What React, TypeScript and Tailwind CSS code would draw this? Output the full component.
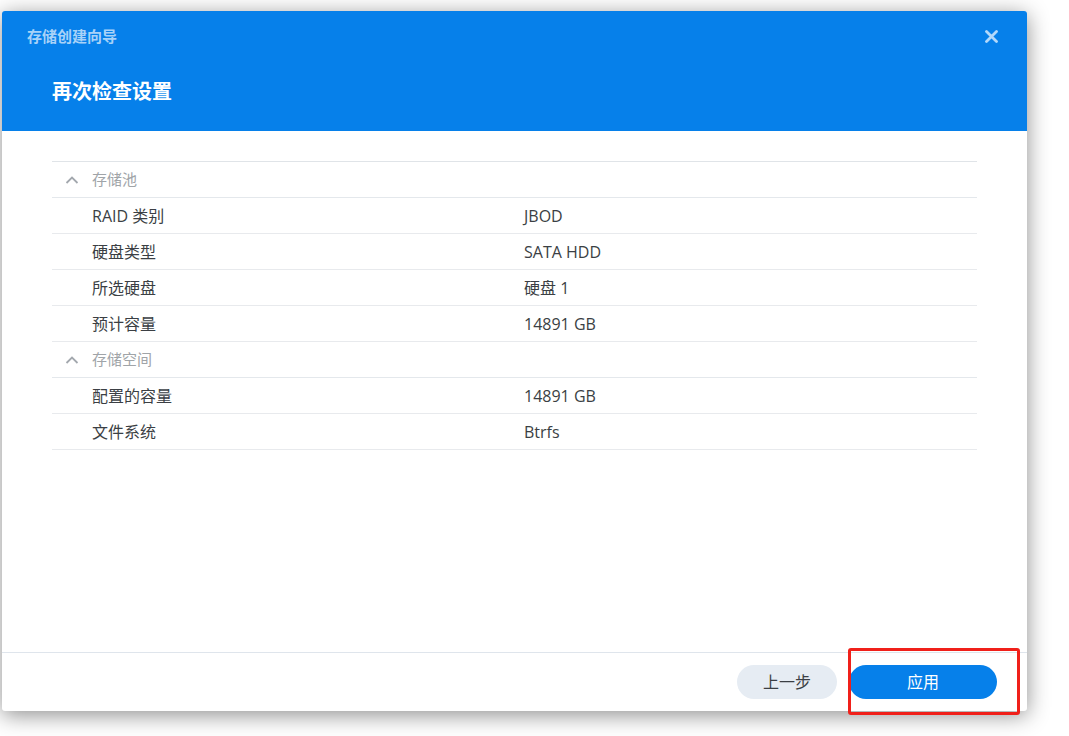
import React from "react";

const font = { fontFamily: '"Open Sans", "Noto Sans CJK SC", "Noto Sans", sans-serif' };

function Chevron() {
  return (
    <svg width="14" height="10" viewBox="0 0 14 10" className="shrink-0">
      <polyline points="1.5,8 7,2.5 12.5,8" fill="none" stroke="#a3a8ae" strokeWidth="1.8" />
    </svg>
  );
}

function Section({ title }: { title: string }) {
  return (
    <div className="flex h-[36px] items-center border-b border-[#e4e8ec] pl-[13px]">
      <Chevron />
      <span className="ml-[13px] text-[15px] text-[#a0a4a8]">{title}</span>
    </div>
  );
}

function Row({ label, value }: { label: string; value: string }) {
  return (
    <div className="flex h-[36px] items-center border-b border-[#e8eaed] text-[16px] text-[#3b3f44]">
      <div className="w-[472px] pl-[40px]">{label}</div>
      <div>{value}</div>
    </div>
  );
}

export default function App() {
  return (
    <div className="relative h-[736px] w-[1069px] overflow-hidden bg-white" style={font}>
      <div className="ml-[2px] mt-[11px] flex h-[700px] w-[1025px] flex-col overflow-hidden rounded-[3px] bg-white shadow-[0_4px_22px_rgba(0,0,0,0.45)]">
        <div className="relative h-[120px] shrink-0 bg-[#0680ea]">
          <div className="pl-[25px] pt-[15px] text-[15px] font-bold leading-[20px] text-[#a8d2f8]">存储创建向导</div>
          <div className="pl-[50px] pt-[32px] text-[20px] font-bold leading-[28px] text-white">再次检查设置</div>
          <svg className="absolute right-[29px] top-[19px]" width="13" height="13" viewBox="0 0 13 13">
            <path d="M1.5 1.5 L11.5 11.5 M11.5 1.5 L1.5 11.5" stroke="#b3d8fa" strokeWidth="2.8" strokeLinecap="round" />
          </svg>
        </div>
        <div className="flex-1 px-[50px] pt-[30px]">
          <div className="border-t border-[#e0e4e8]">
            <Section title="存储池" />
            <Row label="RAID 类别" value="JBOD" />
            <Row label="硬盘类型" value="SATA HDD" />
            <Row label="所选硬盘" value="硬盘 1" />
            <Row label="预计容量" value="14891 GB" />
            <Section title="存储空间" />
            <Row label="配置的容量" value="14891 GB" />
            <Row label="文件系统" value="Btrfs" />
          </div>
        </div>
        <div className="flex h-[59px] shrink-0 items-center justify-end gap-[12px] border-t border-[#dfe5ec] pr-[30px]">
          <button className="h-[34px] w-[100px] shrink-0 rounded-full bg-[#e6ecf3] text-[16px] text-[#3b3f44]">上一步</button>
          <button className="h-[34px] w-[148px] shrink-0 rounded-full bg-[#0680ea] text-[16px] text-white">应用</button>
        </div>
      </div>
      <div className="absolute left-[848px] top-[648px] h-[67px] w-[172px] rounded-[3px] border-[3px] border-[#f0201a]" />
    </div>
  );
}
